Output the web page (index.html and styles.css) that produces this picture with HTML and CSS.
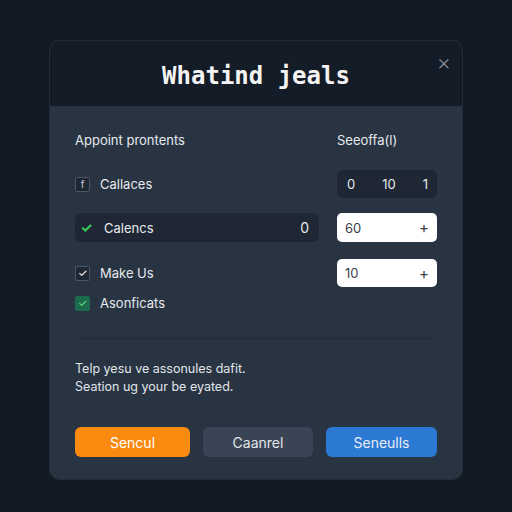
FILE: index.html
```html
<!DOCTYPE html>
<html lang="en">
<head>
  <meta charset="UTF-8">
  <meta name="viewport" content="width=device-width, initial-scale=1.0">
  <title>Whatind jeals</title>
  <link rel="stylesheet" href="styles.css">
</head>
<body>

  <div class="modal">
    <div class="modal-header">
      <h2>Whatind jeals</h2>
      <span class="close">&times;</span>
    </div>

    <div class="modal-body">
      <div class="grid">
        <div class="col-title">Appoint prontents</div>
        <div class="col-title">Seeoffa(l)</div>

        <div class="option row-1">
          <span class="box">f</span>
          <span>Callaces</span>
        </div>
        <div class="range row-1">
          <span>0</span><span>10</span><span>1</span>
        </div>

        <div class="option selected row-2">
          <span class="tick">&#10003;</span>
          <span>Calencs</span>
          <span class="count">0</span>
        </div>
        <div class="stepper row-2">
          <span>60</span><span class="plus">+</span>
        </div>

        <div class="option row-3">
          <span class="box checked">&#10003;</span>
          <span>Make Us</span>
        </div>
        <div class="stepper row-3">
          <span>10</span><span class="plus">+</span>
        </div>

        <div class="option row-4">
          <span class="box green">&#10003;</span>
          <span>Asonficats</span>
        </div>
        <div class="row-4"></div>
      </div>

      <hr class="divider">

      <p class="note">Telp yesu ve assonules dafit.<br>Seation ug your be eyated.</p>

      <div class="actions">
        <button class="btn orange">Sencul</button>
        <button class="btn dark">Caanrel</button>
        <button class="btn blue">Seneulls</button>
      </div>
    </div>
  </div>

</body>
</html>
```

FILE: styles.css
```css
body {
  margin: 0;
  padding: 41px 50px;
  background: #131a24;
  font-family: Inter, "Noto Sans", sans-serif;
  color: #e6e9ee;
}
.modal {
  width: 412px;
  height: 438px;
  border-radius: 10px;
  background: #283442;
  overflow: hidden;
  box-shadow: 0 0 0 1px #222c39;
  display: flex;
  flex-direction: column;
}
.modal-header {
  position: relative;
  height: 65px;
  background: #141c27;
  display: flex;
  align-items: center;
  justify-content: center;
}
.modal-header h2 {
  margin: 4px 0 0;
  font-family: "DejaVu Sans Mono", monospace;
  font-size: 24px;
  font-weight: bold;
  color: #f4f4f4;
}
.close {
  position: absolute;
  right: 11px;
  top: 8px;
  font-size: 22px;
  font-weight: 200;
  color: #9aa3ae;
}
.modal-body {
  padding: 24px 25px 22px;
  flex: 1;
  display: flex;
  flex-direction: column;
}
.grid {
  display: grid;
  grid-template-columns: 244px 100px;
  column-gap: 18px;
  font-size: 13px;
}
.col-title {
  height: 20px;
  line-height: 20px;
  margin-bottom: 20px;
}
.row-1 { height: 28px; }
.row-2 { height: 29px; margin-top: 15px; }
.row-3 { height: 28px; margin-top: 17px; }
.row-4 { height: 18px; margin-top: 7px; }
.option {
  display: flex;
  align-items: center;
  gap: 10px;
}
.option.selected {
  background: #1e2733;
  border-radius: 6px;
  padding: 0 10px 0 4px;
}
.count {
  margin-left: auto;
  font-size: 14px;
}
.box {
  width: 13px;
  height: 13px;
  border: 1px solid #4b5666;
  border-radius: 2px;
  background: #1f2733;
  display: flex;
  align-items: center;
  justify-content: center;
  font-size: 10px;
  color: #c9ced6;
}
.box.checked {
  color: #ffffff;
  font-size: 11px;
}
.box.green {
  background: #1c6b4c;
  border-color: #1c6b4c;
  color: #6fe08a;
  font-size: 11px;
}
.tick {
  width: 15px;
  text-align: center;
  color: #3fcf5c;
  font-size: 14px;
  font-weight: bold;
}
.range {
  background: #1e2733;
  border-radius: 6px;
  display: flex;
  align-items: center;
  justify-content: space-between;
  padding: 0 9px 0 10px;
  font-size: 13px;
}
.stepper {
  background: #ffffff;
  border-radius: 5px;
  display: flex;
  align-items: center;
  justify-content: space-between;
  padding: 0 8px;
  font-size: 13px;
  color: #3a3f47;
}
.plus {
  font-size: 15px;
}
.divider {
  border: none;
  border-top: 1px solid #222c38;
  margin: 26px 0 21px;
}
.note {
  margin: 0;
  font-size: 12.5px;
  line-height: 18px;
  color: #e1e5ea;
}
.actions {
  margin-top: auto;
  display: flex;
  justify-content: space-between;
}
.btn {
  height: 30px;
  border: none;
  border-radius: 6px;
  font-family: Inter, "Noto Sans", sans-serif;
  font-size: 14px;
  color: #ffffff;
  cursor: pointer;
}
.orange {
  width: 115px;
  background: #fb8a10;
}
.dark {
  width: 110px;
  background: #394555;
  color: #e3e6ea;
}
.blue {
  width: 111px;
  background: #2c79d4;
  color: #e8eef8;
}
```
